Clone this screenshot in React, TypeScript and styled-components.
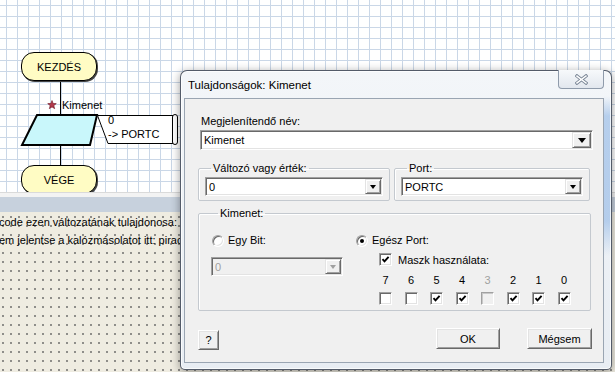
import React from "react";
import styled, { createGlobalStyle } from "styled-components";

const GlobalStyle = createGlobalStyle`
  html, body {
    margin: 0;
    padding: 0;
  }
  body {
    font-family: "Liberation Sans", Arial, sans-serif;
    font-size: 11px;
    color: #000;
  }
  * {
    box-sizing: border-box;
  }
`;

const Screen = styled.div`
  position: relative;
  width: 615px;
  height: 372px;
  overflow: hidden;
  display: flex;
  flex-direction: column;
  background: #fff;
`;

/* ---------- flowchart canvas ---------- */

const Canvas = styled.div`
  position: relative;
  flex: none;
  height: 192px;
  overflow: hidden;
  background-color: #fff;
  background-image: linear-gradient(to right, #cad7e7 1px, transparent 1px),
    linear-gradient(to bottom, #cad7e7 1px, transparent 1px);
  background-size: 11px 11px;
  background-position: 6px 5px;
`;

const FlowLines = styled.svg`
  position: absolute;
  left: 0;
  top: 0;
`;

const Terminal = styled.div<{ $y: number }>`
  position: absolute;
  left: 21px;
  top: ${(p) => p.$y}px;
  width: 76px;
  height: 29px;
  border: 1px solid #000;
  border-radius: 13px;
  background: #fffcc4;
  box-shadow: 1px 1px 0 #444;
  display: flex;
  align-items: center;
  justify-content: center;
  font-size: 11px;
`;

const NodeLabel = styled.span<{ $x: number; $y: number }>`
  position: absolute;
  left: ${(p) => p.$x}px;
  top: ${(p) => p.$y}px;
  font-size: 11px;
  line-height: 13px;
  white-space: nowrap;
`;

/* ---------- lower panes ---------- */

const Splitter = styled.div`
  flex: none;
  height: 5px;
  background: #f3f3f3;
  border-top: 1px solid #dadada;
`;

const Band = styled.div`
  flex: none;
  height: 15px;
  background: #c7d1dd;
`;

const Console = styled.div`
  flex: 1;
  padding-top: 1px;
  line-height: 18px;
  white-space: nowrap;
  background-color: #efece1;
  background-image: radial-gradient(circle at 1px 1px, #5a5a5a 0.6px, transparent 0.9px);
  background-size: 8px 9px;
  background-position: 2px 4px;
`;

const ConsoleLine = styled.div`
  margin-left: -1px;
`;

/* ---------- dialog window ---------- */

const Dialog = styled.div`
  position: absolute;
  left: 180px;
  top: 70px;
  width: 432px;
  height: 300px;
  display: flex;
  flex-direction: column;
  padding: 0 7px 6px 3px;
  border: 1px solid rgba(55, 65, 80, 0.85);
  border-radius: 7px 7px 5px 5px;
  background-color: #edf1f6;
  background-image: linear-gradient(
      to bottom,
      transparent 25px,
      rgba(150, 186, 230, 0.65) 45px,
      rgba(150, 186, 230, 0.65) 150px,
      transparent 185px
    ),
    linear-gradient(to bottom, #f3f6f9, #e8edf3);
  background-size: 7px 100%, 100% 100%;
  background-position: right top, left top;
  background-repeat: no-repeat;
  box-shadow: 0 2px 10px rgba(0, 0, 0, 0.4), inset 0 0 0 1px rgba(255, 255, 255, 0.75);
`;

const TitleBar = styled.div`
  flex: none;
  height: 27px;
  display: flex;
  justify-content: space-between;
  align-items: flex-start;
`;

const TitleText = styled.div`
  padding: 8px 0 0 4px;
  font-size: 11.5px;
  line-height: 13px;
`;

const CloseButton = styled.div`
  margin-top: -1px;
  width: 46px;
  height: 19px;
  display: flex;
  align-items: center;
  justify-content: center;
  border: 1px solid #8f9bab;
  border-top: none;
  border-radius: 0 0 4px 4px;
  background: linear-gradient(to bottom, #f7f9fb, #e2e7ee);
`;

const Client = styled.div`
  flex: 1;
  display: flex;
  flex-direction: column;
  padding: 15px 10px 0 13px;
  background: #f0f0f0;
  border: 1px solid #9aa5b2;
`;

const FieldLabel = styled.div`
  margin-left: 3px;
  line-height: 14px;
`;

const ComboBox = styled.div<{ $disabled?: boolean; $h: number }>`
  display: flex;
  height: ${(p) => p.$h}px;
  padding: 1px;
  border: 1px solid;
  border-color: #a0a0a0 #fff #fff #a0a0a0;
  box-shadow: inset 1px 1px 0 #696969, inset -1px -1px 0 #e3e3e3;
  background: ${(p) => (p.$disabled ? "#f0f0f0" : "#fff")};
  color: ${(p) => (p.$disabled ? "#a0a0a0" : "#000")};
`;

const ComboText = styled.div`
  flex: 1;
  display: flex;
  align-items: center;
  padding-left: 2px;
`;

const DropButton = styled.div<{ $w: number }>`
  width: ${(p) => p.$w}px;
  display: flex;
  align-items: center;
  justify-content: center;
  background: #f0f0f0;
  border: 1px solid;
  border-color: #e3e3e3 #696969 #696969 #e3e3e3;
  box-shadow: inset 1px 1px 0 #fff, inset -1px -1px 0 #a0a0a0;
`;

const Arrow = styled.span<{ $big?: boolean; $disabled?: boolean }>`
  width: 0;
  height: 0;
  border-left: ${(p) => (p.$big ? 4 : 3.5)}px solid transparent;
  border-right: ${(p) => (p.$big ? 4 : 3.5)}px solid transparent;
  border-top: ${(p) => (p.$big ? 5 : 4)}px solid ${(p) => (p.$disabled ? "#a0a0a0" : "#000")};
`;

const NameCombo = styled.div`
  margin: 2px 0 0 2px;
`;

const GroupRow = styled.div`
  display: flex;
  gap: 4px;
  margin: 11px 3px 0 0;
`;

const Group = styled.fieldset<{ $w?: number }>`
  margin: 0;
  min-width: 0;
  width: ${(p) => (p.$w ? `${p.$w}px` : "auto")};
  border: 1px solid #c4c9cf;
  border-radius: 2px;
  box-shadow: inset 1px 1px 0 #fff;
`;

const ValueGroup = styled(Group)`
  padding: 2px 6px 4px 6px;
`;

const OutputGroup = styled(Group)`
  margin: 5px 2px 0 0;
  padding: 14px 8px 5px 13px;
`;

const Legend = styled.legend`
  margin-left: 6px;
  padding: 0 2px;
  line-height: 14px;
`;

const OutputGrid = styled.div`
  display: grid;
  grid-template-columns: 144px 1fr;
`;

const Column = styled.div`
  display: flex;
  flex-direction: column;
`;

const RadioRow = styled.label`
  display: flex;
  align-items: center;
  gap: 4px;
  height: 13px;
  line-height: 13px;
`;

const Radio = styled.span`
  width: 12px;
  height: 12px;
  border-radius: 50%;
  display: inline-flex;
  align-items: center;
  justify-content: center;
  background: #fff;
  border: 1px solid;
  border-color: #a0a0a0 #fff #fff #a0a0a0;
  box-shadow: inset 1px 1px 0 #696969, inset -1px -1px 0 #e3e3e3;
`;

const RadioDot = styled.span`
  width: 4px;
  height: 4px;
  border-radius: 50%;
  background: #000;
`;

const BitCombo = styled.div`
  margin: 10px 0 0 -1px;
  width: 132px;
`;

const MaskRow = styled.label`
  display: flex;
  align-items: center;
  gap: 6px;
  margin: 6px 0 0 23px;
  height: 13px;
`;

const BitGrid = styled.div`
  display: grid;
  grid-template-columns: repeat(8, 13px);
  column-gap: 12.5px;
  row-gap: 6px;
  margin: 8px 0 0 23px;
`;

const BitNumber = styled.span<{ $disabled?: boolean }>`
  text-align: center;
  line-height: 12px;
  color: ${(p) => (p.$disabled ? "#a0a0a0" : "#000")};
`;

const CheckBox = styled.span<{ $disabled?: boolean }>`
  width: 13px;
  height: 13px;
  display: inline-flex;
  align-items: center;
  justify-content: center;
  border: 1px solid;
  border-color: #a0a0a0 #fff #fff #a0a0a0;
  box-shadow: ${(p) =>
    p.$disabled ? "inset 1px 1px 0 #c8c8c8" : "inset 1px 1px 0 #696969, inset -1px -1px 0 #e3e3e3"};
  background: ${(p) => (p.$disabled ? "#f0f0f0" : "#fff")};
`;

const ButtonRow = styled.div`
  display: flex;
  align-items: flex-start;
  margin: 17px 1px 0 0;
`;

const Button = styled.button<{ $w: number; $h: number; $offset?: number }>`
  width: ${(p) => p.$w}px;
  height: ${(p) => p.$h}px;
  margin-top: ${(p) => p.$offset ?? 0}px;
  padding: 0;
  font: inherit;
  color: #000;
  background: #f0f0f0;
  border: 1px solid;
  border-color: #fff #696969 #696969 #fff;
  box-shadow: inset 1px 1px 0 #e3e3e3, inset -1px -1px 0 #a0a0a0;
`;

const Spacer = styled.div`
  flex: 1;
`;

const ButtonGap = styled.div`
  width: 27px;
`;

/* ---------- small parts ---------- */

const Check = ({ on, disabled }: { on: boolean; disabled?: boolean }) => (
  <CheckBox $disabled={disabled}>
    {on ? (
      <svg width="9" height="9" viewBox="0 0 9 9">
        <polyline points="1.5,4.2 3.5,6.4 7.6,1.8" fill="none" stroke="#000" strokeWidth="1.9" />
      </svg>
    ) : null}
  </CheckBox>
);

const Combo = ({
  value,
  h,
  btn,
  big,
  disabled,
}: {
  value: string;
  h: number;
  btn: number;
  big?: boolean;
  disabled?: boolean;
}) => (
  <ComboBox $h={h} $disabled={disabled}>
    <ComboText>{value}</ComboText>
    <DropButton $w={btn}>
      <Arrow $big={big} $disabled={disabled} />
    </DropButton>
  </ComboBox>
);

const bits = [
  { n: "7", on: false },
  { n: "6", on: false },
  { n: "5", on: true },
  { n: "4", on: true },
  { n: "3", on: false, disabled: true },
  { n: "2", on: true },
  { n: "1", on: true },
  { n: "0", on: true },
];

const App = () => {
  return (
    <Screen>
      <GlobalStyle />
      <Canvas>
        <FlowLines width="200" height="192">
          <line x1="60.5" y1="81" x2="60.5" y2="115" stroke="#000" />
          <line x1="60.5" y1="145" x2="60.5" y2="165" stroke="#000" />
          <polygon points="37,115 97,115 90,145 22,145" fill="#c9f7fb" stroke="#000" strokeWidth="2" />
          <polygon
            points="52,100.5 53.12,103.46 56.28,103.61 53.81,105.59 54.65,108.64 52,106.9 49.35,108.64 50.19,105.59 47.72,103.61 50.88,103.46"
            fill="#b23a4c"
            stroke="#6a1020"
            strokeWidth="0.6"
          />
          <polygon points="97.5,115.5 173,115.5 173,143.5 108,143.5" fill="#fff" stroke="#000" />
          <rect x="172.5" y="114.5" width="5" height="30" rx="2.5" fill="#fff" stroke="#000" />
        </FlowLines>
        <Terminal $y={52}>KEZDÉS</Terminal>
        <Terminal $y={165}>VÉGE</Terminal>
        <NodeLabel $x={62} $y={99}>Kimenet</NodeLabel>
        <NodeLabel $x={108} $y={114}>0</NodeLabel>
        <NodeLabel $x={108} $y={128}>-&gt; PORTC</NodeLabel>
      </Canvas>
      <Splitter />
      <Band />
      <Console>
        <ConsoleLine>code ezen változatának tulajdonosa: K</ConsoleLine>
        <ConsoleLine>em jelentse a kalózmásolatot itt: piracy</ConsoleLine>
      </Console>

      <Dialog>
        <TitleBar>
          <TitleText>Tulajdonságok: Kimenet</TitleText>
          <CloseButton>
            <svg width="13" height="11" viewBox="0 0 13 11">
              <path d="M2 2 L11 9 M11 2 L2 9" stroke="#7b8797" strokeWidth="3.4" strokeLinecap="square" />
              <path d="M2 2 L11 9 M11 2 L2 9" stroke="#fff" strokeWidth="1.5" strokeLinecap="square" />
            </svg>
          </CloseButton>
        </TitleBar>
        <Client>
          <FieldLabel>Megjelenítendő név:</FieldLabel>
          <NameCombo>
            <Combo value="Kimenet" h={20} btn={19} big />
          </NameCombo>

          <GroupRow>
            <ValueGroup $w={192}>
              <Legend>Változó vagy érték:</Legend>
              <Combo value="0" h={19} btn={16} />
            </ValueGroup>
            <ValueGroup $w={196}>
              <Legend>Port:</Legend>
              <Combo value="PORTC" h={19} btn={16} />
            </ValueGroup>
          </GroupRow>

          <OutputGroup>
            <Legend>Kimenet:</Legend>
            <OutputGrid>
              <Column>
                <RadioRow>
                  <Radio />
                  Egy Bit:
                </RadioRow>
                <BitCombo>
                  <Combo value="0" h={19} btn={16} disabled />
                </BitCombo>
              </Column>
              <Column>
                <RadioRow>
                  <Radio>
                    <RadioDot />
                  </Radio>
                  Egész Port:
                </RadioRow>
                <MaskRow>
                  <Check on />
                  Maszk használata:
                </MaskRow>
                <BitGrid>
                  {bits.map((b) => (
                    <BitNumber key={"n" + b.n} $disabled={b.disabled}>
                      {b.n}
                    </BitNumber>
                  ))}
                  {bits.map((b) => (
                    <Check key={"c" + b.n} on={b.on} disabled={b.disabled} />
                  ))}
                </BitGrid>
              </Column>
            </OutputGrid>
          </OutputGroup>

          <ButtonRow>
            <Button $w={21} $h={20} $offset={2}>
              ?
            </Button>
            <Spacer />
            <Button $w={64} $h={21}>
              OK
            </Button>
            <ButtonGap />
            <Button $w={65} $h={21}>
              Mégsem
            </Button>
          </ButtonRow>
        </Client>
      </Dialog>
    </Screen>
  );
};

export default App;
